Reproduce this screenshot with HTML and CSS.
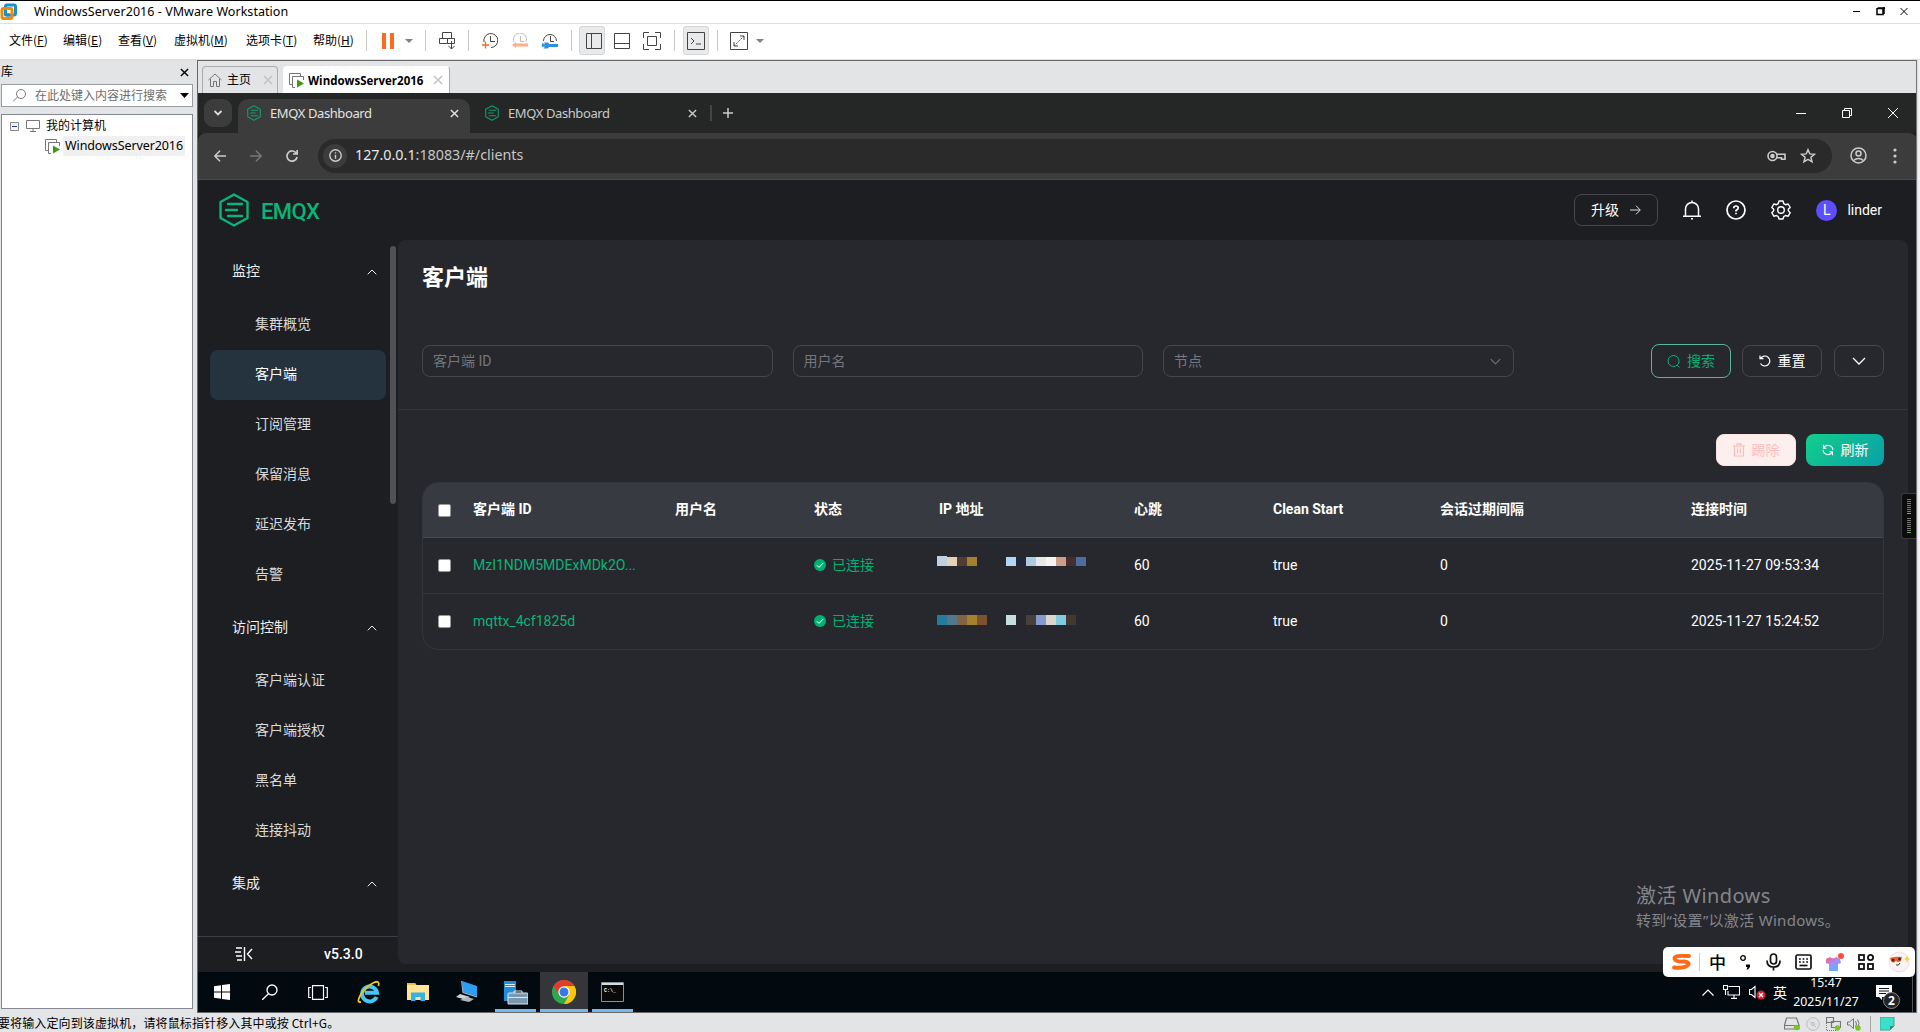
FILE: index.html
```html
<!DOCTYPE html>
<html lang="zh-CN">
<head>
    <meta charset="UTF-8">
    <meta name="viewport" content="width=device-width, initial-scale=1.0">
    <title>WindowsServer2016 - VMware Workstation</title>
    <link rel="stylesheet" href="styles.css">
</head>
<body>
    <!-- 公共图标 -->
    <svg class="defs">
        <symbol id="emqx" viewBox="0 0 30 34">
            <path d="M15 1.5 28.5 9v16L15 32.500 1.500 25V9z" fill="none" stroke="currentColor" stroke-width="2.4" stroke-linejoin="round"/>
            <path d="M9 11h14M7 17h11M9 23h14" stroke="currentColor" stroke-width="2.400" stroke-linecap="round"/>
        </symbol>
        <symbol id="x" viewBox="0 0 10 10">
            <path d="M1 1l8 8M9 1l-8 8" fill="none" stroke="currentColor" stroke-width="1.600"/>
        </symbol>
        <symbol id="up" viewBox="0 0 10 6">
            <path d="M.7 5.300 5 1l4.300 4.300" fill="none" stroke="currentColor"/>
        </symbol>
        <symbol id="down" viewBox="0 0 14 8">
            <path d="M1 1l6 6 6-6" fill="none" stroke="currentColor" stroke-width="1.300"/>
        </symbol>
        <symbol id="vm" viewBox="0 0 15 15">
            <path d="M3 11.500H.5V.5h11V3M6 14.500H3.500v-11h11V7" fill="none" stroke="#777"/>
            <path d="M8 6.500 15 10.500 8 14.500z" fill="#3c9a14"/>
        </symbol>
        <symbol id="ok" viewBox="0 0 12 12">
            <circle cx="6" cy="6" r="6" fill="#00b173"/>
            <path d="M2.800 6.200 5 8.400l4.300-4.500" fill="none" stroke="#fff" stroke-width="1"/>
        </symbol>
    </svg>

    <header class="titlebar">
        <svg class="vm-logo" width="18" height="18" viewBox="0 0 18 18" fill="none" stroke-width="3">
            <rect x="5.500" y="2" width="10" height="10" rx="1.500" stroke="#1b8fcb"/>
            <rect x="2" y="5.500" width="10" height="10" rx="1.500" stroke="#f38b00"/>
            <path d="M5.500 7.500v3.500q0 1 1 1H10" stroke="#1b8fcb"/>
        </svg>
        <span class="win-title">WindowsServer2016 - VMware Workstation</span>
        <svg class="win-ctrl" width="58" height="10" viewBox="0 0 58 10" fill="none" stroke="#000">
            <path d="M1 4.500h7"/>
            <path d="M25 1v6.500h6V1.500h-6M26 1h7M32 0v7" stroke-width="1.500"/>
            <path d="M48.500 1l7 7M55.500 1l-7 7"/>
        </svg>
    </header>

    <nav class="menubar">
        <div class="menus">
            <span>文件(<u>F</u>)</span>
            <span>编辑(<u>E</u>)</span>
            <span>查看(<u>V</u>)</span>
            <span>虚拟机(<u>M</u>)</span>
            <span>选项卡(<u>T</u>)</span>
            <span>帮助(<u>H</u>)</span>
        </div>
        <i class="sep"></i>
        <div class="tools tools-power">
            <svg width="12" height="16"><path d="M0 0h4v16H0zM8 0h4v16H8z" fill="#ff6a1f"/></svg>
            <svg width="8" height="4"><path d="M0 0h8L4 4z" fill="#808080"/></svg>
        </div>
        <i class="sep"></i>
        <div class="tools tools-cad">
            <svg width="17" height="18" viewBox="0 0 17 18" fill="none" stroke="#444">
                <path d="M3.500 6.500v-6h9v6M.5 6.500h8v5h-8zM8.500 6.500h7v5h-7zM12.500 9v8M9.500 14l3 3 3-3" />
            </svg>
        </div>
        <i class="sep"></i>
        <div class="tools tools-snap">
            <svg width="16" height="16" viewBox="0 0 16 16" fill="none">
                <path d="M2 9A7 7 0 1 1 9 14.500M8.500 3v5.500H13" stroke="#444"/>
                <path d="M0 12h7M3.500 8.500v7" stroke="#ff6a1f" stroke-width="1.300"/>
            </svg>
            <svg width="16" height="16" viewBox="0 0 16 16" fill="none">
                <path d="M2 9A6.500 6.500 0 1 1 14 9M8.500 3v5.500H12" stroke="#bbb"/>
                <path d="M0 12l4-3v1.500h12v3H4V15z" fill="#ffae88"/>
            </svg>
            <svg width="16" height="16" viewBox="0 0 16 16" fill="none">
                <path d="M1.500 8A6.500 6.500 0 1 1 14.500 8M8.500 3v5.500H12" stroke="#444"/>
                <path d="M0 10l3 1.500L2 9.500h4l1.500 1.500H16v3H7L5.500 15.500H1.500L3 13.500 0 14z" fill="#2893dc"/>
            </svg>
        </div>
        <i class="sep"></i>
        <div class="tools tools-view">
            <span class="pressed"><svg width="16" height="16" fill="none" stroke="#444"><path d="M.5.5h15v15H.5zM5.500.5v15"/></svg></span>
            <svg width="16" height="16" fill="none" stroke="#444"><path d="M.5.5h15v15H.5zM.5 10.500h15"/></svg>
            <svg width="18" height="18" fill="none" stroke="#444"><path d="M.5 6V.5H6M12 .5h5.500V6M17.500 12v5.500H12M6 17.500H.5V12M4.500 4.500h9v9h-9z"/></svg>
        </div>
        <i class="sep"></i>
        <div class="tools tools-console">
            <span class="pressed"><svg width="18" height="18" fill="none" stroke="#444"><path d="M.5.5h17v17H.5zM4 6l3 3-3 3M9 12h5"/></svg></span>
        </div>
        <i class="sep"></i>
        <div class="tools tools-full">
            <svg width="18" height="18" fill="none" stroke="#444"><path d="M.5.5h17v17H.5zM4 10v4h4M10 4h4v4"/><path d="M4 14 14 4" stroke-dasharray="1.500 1"/></svg>
            <svg width="8" height="4"><path d="M0 0h8L4 4z" fill="#808080"/></svg>
        </div>
    </nav>

    <div class="workspace">
        <aside class="library">
            <div class="lib-head"><span>库</span><svg width="9" height="9"><use href="#x"/></svg></div>
            <div class="lib-search">
                <svg width="13" height="13" fill="none" stroke="#777"><circle cx="8" cy="5" r="4.500"/><path d="M4.500 8 0 12.500"/></svg>
                <span>在此处键入内容进行搜索</span>
                <svg width="9" height="5"><path d="M0 0h9L4.500 5z"/></svg>
            </div>
            <div class="lib-tree">
                <div class="node">
                    <svg width="9" height="9" fill="none"><path d="M.5.5h8v8h-8z" stroke="#888" fill="#f4f4f4"/><path d="M2 4.500h5" stroke="#24439c"/></svg>
                    <svg class="pc" width="14" height="12" fill="none" stroke="#777"><path d="M.5.5h13v8H.5zM7 9v2M4 11.500h6"/></svg>
                    <span>我的计算机</span>
                </div>
                <div class="node child">
                    <svg width="15" height="15"><use href="#vm"/></svg>
                    <span class="selected">WindowsServer2016</span>
                </div>
            </div>
        </aside>

        <main class="vm-area">
            <div class="vm-tabs">
                <div class="vm-tab home">
                    <svg width="14" height="14" fill="none" stroke="#777"><path d="M.5 7 7 1l6.500 6M2.500 6v7.500h3v-5h3v5h3V6"/></svg>
                    <span>主页</span>
                    <svg class="tab-x" width="10" height="10"><use href="#x"/></svg>
                </div>
                <div class="vm-tab current">
                    <svg width="15" height="15"><use href="#vm"/></svg>
                    <span>WindowsServer2016</span>
                    <svg class="tab-x" width="10" height="10"><use href="#x"/></svg>
                </div>
            </div>

            <div class="guest">
                <div class="tabstrip">
                    <span class="tab-search"><svg width="8" height="6" fill="none" stroke="#ddd" stroke-width="1.800"><path d="M.5 1 4 4.500 7.500 1"/></svg></span>
                    <div class="ctab active">
                        <svg class="fav" width="14" height="16"><use href="#emqx"/></svg>
                        <span>EMQX Dashboard</span>
                        <svg width="9" height="9"><use href="#x"/></svg>
                    </div>
                    <div class="ctab">
                        <svg class="fav" width="14" height="16"><use href="#emqx"/></svg>
                        <span>EMQX Dashboard</span>
                        <svg width="9" height="9"><use href="#x"/></svg>
                    </div>
                    <i class="tab-sep"></i>
                    <svg class="tab-plus" width="10" height="10" stroke="#ccc" stroke-width="1.500"><path d="M5 0v10M0 5h10"/></svg>
                    <svg class="chrome-ctrl" width="104" height="12" fill="none" stroke="#fff">
                        <path d="M1 6.500h10M47.500 3.500h7v7h-7zM49.500 3.500v-2h7v7h-2M93 1l10 10M103 1l-10 10"/>
                    </svg>
                </div>

                <div class="toolbar">
                    <svg width="12" height="12" fill="none" stroke="#ccc" stroke-width="1.600"><path d="M12 6H1M6 .8.800 6 6 11.200"/></svg>
                    <svg width="12" height="12" fill="none" stroke="#777" stroke-width="1.600"><path d="M0 6h11M6 .8 11.200 6 6 11.200"/></svg>
                    <svg width="12" height="12" fill="none" stroke="#ccc" stroke-width="1.700"><path d="M10.300 3.200A5.100 5.100 0 1 0 11.100 7M11.200 0v4H7"/></svg>
                    <div class="omnibox">
                        <span class="info"><svg width="13" height="13" fill="none" stroke="#ccc" stroke-width="1.400"><circle cx="6.500" cy="6.500" r="5.700"/><path d="M6.500 5.700v4M6.500 3.200v1.400"/></svg></span>
                        <span class="url">127.0.0.1<em>:18083/#/clients</em></span>
                        <svg width="19" height="12" fill="none" stroke="#ccc" stroke-width="1.600"><circle cx="5.500" cy="6" r="4.500"/><circle cx="5.500" cy="6" r="1.500" fill="#ccc"/><path d="M9.800 4.200H18v5h-3.500V7.800H10"/></svg>
                        <svg class="star" width="16" height="16" viewBox="0 0 16 16" fill="none" stroke="#ccc" stroke-width="1.500"><path d="M8 1.700l1.800 4.200 4.600.4-3.500 3 1.100 4.500L8 11.400l-4 2.400 1.100-4.500-3.500-3 4.600-.4z"/></svg>
                    </div>
                    <svg class="profile" width="17" height="17" fill="none" stroke="#ccc" stroke-width="1.500"><circle cx="8.500" cy="8.500" r="7.500"/><circle cx="8.500" cy="6.500" r="2.500"/><path d="M3.500 13.500q5-4 10 0"/></svg>
                    <svg width="4" height="16" fill="#ccc"><circle cx="2" cy="2" r="1.600"/><circle cx="2" cy="8" r="1.600"/><circle cx="2" cy="14" r="1.600"/></svg>
                </div>

                <div class="page">
                    <div class="page-head">
                        <svg class="logo" width="30" height="34"><use href="#emqx"/></svg>
                        <span class="brand">EMQX</span>
                        <span class="btn upgrade">升级 <svg width="11" height="10" fill="none" stroke="#ddd"><path d="M0 5h10M6 .7 10.300 5 6 9.300"/></svg></span>
                        <svg width="20" height="20" fill="none" stroke="#fff" stroke-width="1.500"><path d="M1 16.300h18M3.500 16V9a6.500 6.500 0 0 1 13 0v7M10 .5v2M9 18.700h2"/></svg>
                        <svg width="20" height="20" fill="none" stroke="#fff" stroke-width="1.700"><circle cx="10" cy="10" r="9"/><path d="M7.800 8.200q0-2.200 2.200-2.200t2.200 2q0 1.300-2.200 2.500v1M10 12.700v1.500"/></svg>
                        <svg width="20" height="20" viewBox="0 0 20 20" fill="none" stroke="#fff" stroke-width="1.400" stroke-linejoin="round"><path d="M8 1h4l.8 2.700 1.700 1 2.700-.7 2 3.500L17.300 9.300v1.500l1.900 1.900-2 3.500-2.700-.7-1.700 1L12 19H8l-.8-2.500-1.700-1-2.700.7-2-3.500 1.900-1.900V9.300L.8 7.500l2-3.500 2.700.7 1.700-1z"/><circle cx="10" cy="10" r="3.300"/></svg>
                        <span class="avatar">L</span>
                        <span class="user">linder</span>
                    </div>

                    <div class="page-body">
                        <div class="side">
                            <ul class="side-menu">
                                <li class="group">监控<svg width="10" height="6"><use href="#up"/></svg></li>
                                <li>集群概览</li>
                                <li class="active">客户端</li>
                                <li>订阅管理</li>
                                <li>保留消息</li>
                                <li>延迟发布</li>
                                <li>告警</li>
                                <li class="group">访问控制<svg width="10" height="6"><use href="#up"/></svg></li>
                                <li>客户端认证</li>
                                <li>客户端授权</li>
                                <li>黑名单</li>
                                <li>连接抖动</li>
                                <li class="group">集成<svg width="10" height="6"><use href="#up"/></svg></li>
                            </ul>
                            <i class="side-scroll"></i>
                            <div class="side-foot">
                                <svg width="18" height="16" fill="none" stroke="#fff" stroke-width="1.400"><path d="M1 2h6M0 6h6M1 10h6M2 14h5M9.500 1v14M17 3l-4.500 5 4.500 5"/></svg>
                                <span>v5.3.0</span>
                            </div>
                        </div>

                        <div class="content">
                            <h1>客户端</h1>
                            <div class="filters">
                                <div class="input">客户端 ID</div>
                                <div class="input">用户名</div>
                                <div class="input select">节点<svg width="11" height="7"><use href="#down"/></svg></div>
                                <div class="filter-btns">
                                    <span class="btn search"><svg width="13" height="13" fill="none" stroke="#00b173"><circle cx="6.500" cy="6" r="5.500"/><path d="M10 10l2.500 2.500"/></svg>搜索</span>
                                    <span class="btn"><svg width="12" height="12" fill="none" stroke="#fff" stroke-width="1.200"><path d="M1.500 3.500A5 5 0 1 1 1.500 8.500M1 .5v3.200h3.500"/></svg>重置</span>
                                    <span class="btn more"><svg width="14" height="8"><use href="#down"/></svg></span>
                                </div>
                            </div>
                            <div class="actions">
                                <span class="btn kick"><svg width="12" height="14" fill="none" stroke="#fbbcbc" stroke-width="1.200"><path d="M0 3h12M4 3V.8h4V3M1.500 3v10h9V3M4.500 5.500v5M7.500 5.500v5"/></svg>踢除</span>
                                <span class="btn refresh"><svg width="12" height="12" fill="none" stroke="#fff" stroke-width="1.100"><path d="M1.500.8v3.400h3M1.600 4.200A4.900 4.900 0 0 1 10.900 6M10.500 11.200V7.800h-3M10.400 7.800A4.900 4.900 0 0 1 1.100 6"/></svg>刷新</span>
                            </div>
                            <div class="table">
                                <div class="row head">
                                    <i class="check"></i><span>客户端 ID</span><span>用户名</span><span>状态</span><span>IP 地址</span><span>心跳</span><span>Clean Start</span><span>会话过期间隔</span><span>连接时间</span>
                                </div>
                                <div class="row">
                                    <i class="check"></i>
                                    <span class="link">MzI1NDM5MDExMDk2O...</span>
                                    <span></span>
                                    <span class="state"><svg width="12" height="12"><use href="#ok"/></svg>已连接</span>
                                    <svg class="mosaic first" width="150" height="10">
                                        <path d="M0 0h10v10H0z" fill="#bfd0e3"/><path d="M10 1h10v9H10z" fill="#e5d1b5"/><path d="M20 1h10v9H20z" fill="#533b31"/><path d="M30 1h10v9H30z" fill="#a47f2c"/>
                                        <path d="M69 1h10v9H69z" fill="#afd7f1"/><path d="M79 1h10v9H79z" fill="#24263a"/><path d="M89 1h10v9H89z" fill="#afcbe2"/><path d="M99 1h10v9H99z" fill="#e7e8ea"/><path d="M109 1h10v9h-10z" fill="#f6f3f0"/><path d="M119 1h10v9h-10z" fill="#cc9e8a"/><path d="M129 1h10v9h-10z" fill="#432f2d"/><path d="M139 1h10v9h-10z" fill="#4d6c9f"/>
                                    </svg>
                                    <span>60</span><span>true</span><span>0</span><span>2025-11-27 09:53:34</span>
                                </div>
                                <div class="row">
                                    <i class="check"></i>
                                    <span class="link">mqttx_4cf1825d</span>
                                    <span></span>
                                    <span class="state"><svg width="12" height="12"><use href="#ok"/></svg>已连接</span>
                                    <svg class="mosaic" width="150" height="10">
                                        <path d="M0 0h10v10H0z" fill="#257b9b"/><path d="M10 0h10v10H10z" fill="#527890"/><path d="M20 0h10v10H20z" fill="#846342"/><path d="M30 0h10v10H30z" fill="#a4822d"/><path d="M40 0h10v10H40z" fill="#7d532f"/>
                                        <path d="M69 0h10v10H69z" fill="#c3dfe0"/><path d="M89 0h10v10H89z" fill="#464239"/><path d="M99 0h10v10H99z" fill="#8799d2"/><path d="M109 0h10v10h-10z" fill="#dbd6cb"/><path d="M119 0h10v10h-10z" fill="#7fcbdf"/><path d="M129 0h10v10h-10z" fill="#43372f"/>
                                    </svg>
                                    <span>60</span><span>true</span><span>0</span><span>2025-11-27 15:24:52</span>
                                </div>
                            </div>
                        </div>
                    </div>
                </div>

                <div class="taskbar">
                    <span class="task"><svg width="16" height="16" fill="#fff"><path d="M0 2.200 7 1.200v6.300H0zM8 1 16 0v7.500H8zM0 8.500h7v6.300L0 13.800zM8 8.500h8V16l-8-1z"/></svg></span>
                    <span class="task"><svg width="16" height="16" fill="none" stroke="#fff" stroke-width="1.300"><circle cx="10" cy="6" r="5"/><path d="M6.500 9.800 0 16"/></svg></span>
                    <span class="task"><svg width="20" height="15" fill="none" stroke="#fff" stroke-width="1.200"><path d="M4.500.7h11v13.600h-11zM3 2.500H.7v10H3M17 2.500h2.300v10H17"/></svg></span>
                    <span class="task ie"><svg width="24" height="24" viewBox="0 0 24 24" fill="none"><path d="M19.500 17A7.500 7.500 0 1 1 20 12.700H8" stroke="#45c6f4" stroke-width="4"/><path d="M4 22Q-1 23 3.500 15T17 2.500q6-2.500 4.500 3.500" stroke="#f5c518" stroke-width="1.800"/></svg></span>
                    <span class="task"><svg width="22" height="20" viewBox="0 0 22 20"><path d="M0 1h8l1.500 2H22v15H0z" fill="#ffe594"/><path d="M0 1h8l1 2H0z" fill="#f0b93c"/><path d="M4 10.500h14V19h-4.500v-4h-5v4H4z" fill="#38b0e6"/></svg></span>
                    <span class="task"><svg width="24" height="24" viewBox="0 0 24 24"><path d="M7 1l15 5v10L8 12z" fill="#2c9ff5"/><path d="M6 1h1l1.500 11L22 16v1.500L7.500 13z" fill="#8cb7da"/><path d="M5 14l10 3-5 2.500L1 17z" fill="#cfd6da"/><path d="M12 17l7 2-5 3-9-2z" fill="#aeb6bd"/></svg></span>
                    <span class="task open"><svg width="24" height="25" viewBox="0 0 24 25"><path d="M0 1h12v20H0z" fill="#238cd9"/><path d="M1 6.500h10M1 4.500h10" stroke="#d7edfb"/><path d="M4 14q0-1 1-1h18q1 0 1 1v10H4z" fill="#7a98af" stroke="#dce7ee"/><path d="M10 13v-2h8v2M4 17.500h20" stroke="#dce7ee" fill="none"/></svg></span>
                    <span class="task open wide"><svg width="24" height="24" viewBox="0 0 24 24"><circle cx="12" cy="12" r="12" fill="#2da94f"/><path d="M1.600 6A12 12 0 0 1 22.400 6H12L7 15z" fill="#e33b2e"/><path d="M22.400 6A12 12 0 0 1 12 24L17 15 12 6z" fill="#fdc60b"/><circle cx="12" cy="12" r="5.700" fill="#fff"/><circle cx="12" cy="12" r="4.500" fill="#3778e8"/></svg></span>
                    <span class="task open cmd"><svg width="23" height="20" viewBox="0 0 23 20"><path d="M.5.5h22v19H.5z" fill="#090909" stroke="#8a8f94"/><path d="M1 1h21v2H1z" fill="#d5dde3"/><text x="3" y="10" font-size="5" font-weight="700" font-family="Liberation Mono" fill="#fff">C:\_</text></svg></span>
                    <div class="tray">
                        <svg width="12" height="7" fill="none" stroke="#fff" stroke-width="1.200"><path d="M.5 6.500 6 1l5.500 5.500"/></svg>
                        <svg width="17" height="14" fill="none" stroke="#fff" stroke-width="1.100"><path d="M5.500 1.500h11v8.500H5V6M8 13.400h6M11 10v3M.5.5h4v4h-4zM2.500 5v5"/></svg>
                        <svg width="17" height="15" fill="none" stroke="#fff" stroke-width="1.100"><path d="M.5 4.500h2l3.500-3v11l-3.500-3h-2z"/><circle cx="12" cy="10" r="4.500" fill="#d9202a" stroke="none"/><path d="M10 8l4 4M14 8l-4 4" stroke-width="1.300"/></svg>
                        <span class="lang">英</span>
                        <span class="clock">15:47<br>2025/11/27</span>
                        <span class="notify"><svg width="17" height="15"><path d="M0 0h16v12H6v3l-3-3H0z" fill="#fff"/><path d="M3 3.500h10M3 6h10M3 8.500h7" stroke="#111"/></svg><b>2</b></span>
                        <i class="peek"></i>
                    </div>
                </div>

                <!-- 浮层 -->
                <div class="watermark"><p>激活 Windows</p><small>转到“设置”以激活 Windows。</small></div>
                <div class="io-handle"><i></i><i class="green"></i></div>
                <div class="ime">
                    <svg width="19" height="16" viewBox="0 0 19 16" fill="none" stroke="#ff6a17" stroke-width="3.800" stroke-linecap="round"><path d="M17 2Q2 1 2.500 4.500T12 7.500q7 1 3.500 4T2 13.500"/></svg>
                    <i></i>
                    <span>中</span>
                    <svg width="12" height="15"><circle cx="3" cy="3" r="2.300" fill="none" stroke="#000" stroke-width="1.300"/><path d="M6 9.500h4V12l-2 2.500H6.500L7.500 12H6z"/></svg>
                    <svg width="15" height="18" fill="none" stroke="#111" stroke-width="1.700"><rect x="4.500" y="1" width="6" height="10" rx="3"/><path d="M1 7.500q0 6.500 6.500 6.500T14 7.500M7.500 14v3.500"/></svg>
                    <svg width="17" height="16" fill="none" stroke="#111" stroke-width="1.700"><rect x="1" y="1" width="15" height="14" rx="1.500"/><path d="M4 5h9M4 8h9" stroke-dasharray="1.800 1.800"/><path d="M4.500 11.500h8"/></svg>
                    <svg width="18" height="18" viewBox="0 0 18 18"><defs><linearGradient id="shirt" x2=".6" y2="1"><stop stop-color="#ff5c73"/><stop offset=".5" stop-color="#a98bf5"/><stop offset="1" stop-color="#53b7ff"/></linearGradient></defs><path d="M0 6l4-2q3 2.500 6 0l4 2 1 4-3 1v7H3v-7L0 10z" fill="url(#shirt)"/><circle cx="15" cy="3" r="3" fill="#ff4d3a"/></svg>
                    <svg width="16" height="16" fill="none" stroke="#111" stroke-width="1.800"><rect x="1" y="1" width="5" height="5"/><circle cx="12.500" cy="3.500" r="2.600"/><rect x="1" y="10" width="5" height="5"/><rect x="10" y="10" width="5" height="5"/></svg>
                    <svg width="22" height="22" viewBox="0 0 22 22"><circle cx="11" cy="11" r="10" fill="#f8f3f4" stroke="#eedede"/><path d="M2 7q7-2 12-1l-1 4q-3 2-5 0-3 3-5 0z" fill="#e8642a"/><circle cx="5" cy="9" r="1.500" fill="#4b251e"/><circle cx="11.500" cy="8" r="1.500" fill="#4b251e"/><path d="M8 14q3 1 4-2" stroke="#333" fill="none"/><path d="M19 4l1 3 2 1-2 1-1 3-1-3-2-1 2-1z" fill="#fdcf35"/></svg>
                </div>
            </div>
        </main>
        <i class="edge"></i>
    </div>

    <footer class="statusbar">
        <span>要将输入定向到该虚拟机，请将鼠标指针移入其中或按 Ctrl+G。</span>
        <div class="devices">
            <svg width="16" height="14" fill="none" stroke="#777"><path d="M2.500 1h10l2.500 7v4H.5V8zM.5 8.500H15" stroke-width="1.200"/><circle cx="12.500" cy="10.500" r="2.700" fill="#7ac520" stroke="none"/></svg>
            <svg width="14" height="14" fill="none" stroke="#bbb"><circle cx="7" cy="7" r="6.300"/><circle cx="7" cy="7" r="1.500"/><path d="M4 4.500l1.500 1.500M8.500 8.500 10 10"/></svg>
            <svg width="15" height="14" fill="none" stroke="#777"><path d="M.5.5h7v5h-7zM5.500 4.500h9v6h-9z" stroke-width="1.200"/><path d="M.5 6v7.500h10" stroke-dasharray="1 1"/><circle cx="11.500" cy="11" r="2.700" fill="#7ac520" stroke="none"/></svg>
            <svg width="14" height="14" fill="none" stroke="#777"><path d="M.5 5h2l4-3.500v10l-4-3.500h-2zM8.500 4q2 3 0 6M10.500 2.500q3 4 0 8"/><circle cx="11" cy="11" r="2.700" fill="#7ac520" stroke="none"/></svg>
            <i></i>
            <svg width="15" height="14"><path d="M0 0h14v9l-4 4H0z" fill="#3be0c8" stroke="#38a898"/><path d="M14 9h-4v4z" fill="#258f80"/></svg>
        </div>
    </footer>
</body>
</html>
```

FILE: styles.css
```css
* {box-sizing: border-box;}

body {
    margin: 0;
    width: 1920px;
    height: 1032px;
    overflow: hidden;
    display: grid;
    grid-template-rows: 24px 36px 953px 19px;
    background: #e2e4e6;
    color: #000;
    font: 12px/16px "Noto Sans", "Noto Sans CJK SC", sans-serif;
}

svg {
    display: block;
    flex: none;
}

i, em {font-style: normal;}

.defs {
    position: absolute;
    width: 0;
    height: 0;
}

/* VMware 标题栏 */
.titlebar {
    display: flex;
    align-items: center;
    padding: 0 10px 0 0;
    background: #fff;
    border-top: 1px solid #000;
    border-bottom: 1px solid #dfe0e1;
}

.win-title {
    margin-left: 16px;
    font-size: 12.5px;
    letter-spacing: 0.05px;
}

.win-ctrl {margin-left: auto;}

.menubar {
    display: flex;
    align-items: center;
    background: #fff;
    border-bottom: 1px solid #dfe0e1;
    padding-bottom: 2px;
}

.menus {
    display: grid;
    grid-template-columns: 54px 55px 56px 72px 67px 53px;
    padding: 0 0 2px 9px;
    font-family: "Noto Sans CJK SC", sans-serif;
}

.menus span {white-space: nowrap;}

.sep {
    width: 1px;
    height: 21px;
    background: #c8c8c8;
}

.tools {
    display: flex;
    align-items: center;
}

.tools-power {width: 58px; padding-left: 15px; gap: 11px;}
.tools-cad {width: 42px; padding-left: 13px;}
.tools-snap {width: 102px; padding-left: 13px; gap: 14px;}
.tools-view {width: 102px; padding-left: 7px; gap: 9px;}
.tools-view svg:last-child {margin-left: 4px;}
.tools-console {width: 42px; padding-left: 8px;}
.tools-full {padding-left: 12px; gap: 8px;}

.pressed {
    display: flex;
    align-items: center;
    justify-content: center;
    width: 26px;
    height: 29px;
    border: 1px solid #d4d5d6;
    border-radius: 3px;
    background: #e9eaeb;
}

.workspace {
    display: grid;
    grid-template-columns: 197px 1720px 3px;
}

.edge {
    background: #f0f0f0;
    border-left: 1px solid #dcdcdc;
}

/* 左侧库 */
.library {
    display: flex;
    flex-direction: column;
    padding: 0 4px 4px 1px;
}

.lib-head {
    display: flex;
    align-items: center;
    justify-content: space-between;
    height: 24px;
    padding-right: 4px;
}

.lib-search {
    display: flex;
    align-items: center;
    height: 23px;
    background: #fff;
    border: 1px solid #999da0;
    color: #6d6d6d;
    padding: 0 3px 0 11px;
}

.lib-search span {margin: 0 auto 0 9px;}

.lib-tree {
    flex: 1;
    margin-top: 7px;
    padding-top: 1px;
    background: #fff;
    border: 1px solid #828790;
}

.node {
    display: flex;
    align-items: center;
    height: 20px;
    padding-left: 8px;
}

.node .pc {margin: 0 6px 0 7px;}

.node.child {padding-left: 43px;}

.selected {
    margin-left: 3px;
    padding: 2px;
    background: #f0f0f0;
    font-size: 12.500px;
    letter-spacing: -0.1px;
}

.vm-area {
    display: grid;
    grid-template-rows: 32px 919px;
    border: 1px solid #66686a;
    border-right-color: #77797c;
    overflow: hidden;
}

.vm-tabs {
    display: flex;
    align-items: flex-end;
    padding-left: 4px;
    gap: 5px;
    background: #e2e4e6;
}

.vm-tab {
    display: flex;
    align-items: center;
    height: 27px;
    border: 1px solid #aaadb0;
    border-bottom: 0;
    border-radius: 4px 4px 0 0;
    padding-left: 5px;
}

.vm-tab.home {width: 76px;}

.vm-tab.home span {margin: 0 12px 0 5px;}

.vm-tab.current {
    width: 167px;
    background: #fff;
    border-color: #fff #aaadb0 #fff #fff;
    font: bold 11.500px "Open Sans", sans-serif;
}

.vm-tab.current span {
    width: 116px;
    margin: 0 9px 0 4px;
    white-space: nowrap;
}

.tab-x {color: #c2c3c4;}

/* 虚拟机画面 */
.guest {
    position: relative;
    display: grid;
    grid-template-rows: 40px 47px 792px 40px;
    background: #1d1e22;
    color: #fff;
}

.tabstrip {
    display: flex;
    align-items: center;
    background: #242725;
    padding-left: 6px;
}

.tab-search {
    display: flex;
    align-items: center;
    justify-content: center;
    width: 28px;
    height: 28px;
    margin-right: 6px;
    border-radius: 9px;
    background: #3c3c3c;
}

.ctab {
    display: flex;
    align-items: center;
    width: 238px;
    height: 34px;
    padding: 0 11px 6px 15px;
    align-self: flex-end;
    color: #c9cac9;
    font-size: 13px;
}

.ctab.active {
    width: 232px;
    padding: 0 11px 6px 9px;
    border-radius: 10px 10px 0 0;
    background: #3c3c3c;
    color: #e3e3e3;
}

.ctab .fav {
    color: #109a6b;
    margin-right: 9px;
}

.ctab span {
    margin-right: auto;
    letter-spacing: -0.4px;
}

.tab-sep {
    width: 2px;
    height: 16px;
    margin-left: 2px;
    background: #444;
}

.tab-plus {margin-left: 11px;}

.chrome-ctrl {margin: 0 18px 0 auto;}

.toolbar {
    display: flex;
    align-items: center;
    gap: 24px;
    padding: 0 20px 1px 16px;
    background: #3c3c3c;
    border-bottom: 1px solid #4c4c4c;
    border-radius: 8px 8px 0 0;
}

.omnibox {
    display: flex;
    align-items: center;
    width: 1514px;
    height: 34px;
    margin-left: -4px;
    padding: 0 16px 0 5px;
    border-radius: 17px;
    background: #2a2a2a;
}

.info {
    display: flex;
    align-items: center;
    justify-content: center;
    width: 24px;
    height: 24px;
    border-radius: 50%;
    background: #3c3c3c;
}

.url {
    margin: 0 auto 2px 8px;
    color: #e8e8e8;
    font-size: 14.300px;
}

.url em {color: #c7c7c7;}

.star {margin-left: 14px;}

.profile {margin: 0 2px 0 -6px;}

/* EMQX 页面 */
.page {
    display: grid;
    grid-template-rows: 60px 732px;
    font: 14px/20px Roboto, "Noto Sans CJK SC", sans-serif;
}

.page-head {
    display: flex;
    align-items: center;
    padding: 0 35px 0 21px;
}

.logo {color: #0bb377;}

.brand {
    margin: 3px auto 0 12px;
    color: #0bb377;
    font-size: 22px;
    font-weight: 500;
    letter-spacing: -0.6px;
}

.page-head > svg:not(.logo) {margin-right: 24.500px;}

.btn {
    display: flex;
    align-items: center;
    justify-content: center;
    gap: 7px;
    width: 80px;
    height: 32px;
    border: 1px solid #45474d;
    border-radius: 8px;
    color: #fff;
    white-space: nowrap;
}

.page-head .upgrade {
    width: 84px;
    gap: 11px;
    margin-right: 24px;
}

.avatar {
    width: 21px;
    height: 21px;
    line-height: 21px;
    margin: 1px 10px 0 1px;
    border-radius: 50%;
    background: #5e4eff;
    text-align: center;
}

.page-body {
    display: grid;
    grid-template-columns: 200px 1510px;
}

.side {
    position: relative;
    display: grid;
    grid-template-rows: 696px 36px;
}

.side-menu {
    list-style: none;
    margin: 0;
    padding: 4px 0 0 12px;
    overflow: hidden;
}

.side-menu li {
    width: 176px;
    height: 50px;
    padding-left: 45px;
    line-height: 49px;
    border-radius: 8px;
    color: #d9dadc;
}

.side-menu .group {
    display: flex;
    align-items: center;
    justify-content: space-between;
    height: 56px;
    padding: 0 9px 2px 22px;
    color: #eee;
}

.group svg {margin-top: 2px;}

.side-menu .active {
    background: #25333e;
    color: #fff;
}

.side-scroll {
    position: absolute;
    right: 2px;
    top: 6px;
    width: 6px;
    height: 258px;
    border-radius: 3px;
    background: #505155;
}

.side-foot {
    display: flex;
    align-items: center;
    gap: 71px;
    padding: 0 0 2px 37px;
    border-top: 1px solid #3c3d42;
    font-weight: 500;
}

.content {
    height: 724px;
    border-radius: 8px;
    background: #27282d;
}

h1 {
    margin: 0;
    padding: 25px 0 0 24px;
    height: 105px;
    font-size: 22px;
    line-height: 26px;
}

.filters {
    display: flex;
    gap: 20px;
    height: 65px;
    padding: 0 24px;
    border-bottom: 1px solid #35363b;
}

.input {
    width: 350.500px;
    height: 32px;
    padding: 0 10px;
    border: 1px solid #45474d;
    border-radius: 8px;
    color: #74767c;
    line-height: 30px;
}

.select {
    display: flex;
    justify-content: space-between;
    align-items: center;
    padding-right: 12px;
    color: #77797f;
}

.filter-btns {
    display: flex;
    gap: 12px;
    margin-left: auto;
}

.search {
    height: 34px;
    margin: -1px -1px 0 0;
    border-color: #58b79b;
    color: #00b173;
}

.more {width: 50px;}

.actions {
    display: flex;
    justify-content: flex-end;
    gap: 10px;
    padding: 24px 24px 16px;
}

.kick {
    border-color: #fde2e2;
    background: #feefef;
    color: #fbbcbc;
}

.refresh {
    width: 78px;
    border: 0;
    background: linear-gradient(135deg, #13cf8a, #0a9fa8);
}

.table {
    margin: 0 24px;
    border: 1px solid #33363b;
    border-radius: 16px;
    overflow: hidden;
}

.row {
    display: grid;
    grid-template-columns: 50px 202px 139px 125px 195px 139px 167px 251px 193px;
    align-items: center;
    height: 56px;
    border-bottom: 1px solid #35363b;
}

.row:last-child {
    height: 55px;
    border: 0;
}

.row.head {
    height: 55px;
    background: #373b41;
    border-color: #45484d;
    font-weight: 700;
}

.row > span {margin-top: -2px;}

.check {
    width: 13px;
    height: 13px;
    margin: 0 0 0 15px;
    border: 1px solid #999;
    border-radius: 2px;
    background: #fff;
}

.link {color: #0bb377;}

.state {
    display: flex;
    align-items: center;
    gap: 6px;
    color: #00b173;
}

.mosaic {margin: -4px 0 0 -2px;}

.mosaic.first {margin-top: -9px;}

/* 任务栏 */
.taskbar {
    display: flex;
    background: #02090f;
}

.task {
    display: flex;
    align-items: center;
    justify-content: center;
    width: 49px;
    border-bottom: 3px solid transparent;
    padding-top: 3px;
}

.task:nth-child(-n+3) {width: 48px;}

.task.ie {margin-left: 2px;}

.task.open {
    width: 41px;
    margin: 0 4px 0 4px;
    border-color: #76b9ed;
}

.task.wide {
    width: 48px;
    margin: 0 4px 0 0;
    background: #34363a;
}

.task.cmd {margin: 0;}

.tray {
    display: flex;
    align-items: center;
    margin-left: auto;
}

.tray svg {margin-right: 9px;}

.lang {
    width: 16px;
    margin-left: -2px;
    font: 14px "Noto Sans CJK SC", sans-serif;
}

.clock {
    width: 76px;
    margin: 0 5px 0 -1px;
    font-size: 12.300px;
    line-height: 19px;
    text-align: center;
}

.notify {
    position: relative;
    margin-left: 7px;
}

.notify b {
    position: absolute;
    left: 7px;
    top: 7px;
    width: 17px;
    height: 17px;
    border: 1px solid #888;
    border-radius: 50%;
    background: #222529;
    line-height: 15px;
    text-align: center;
}

.peek {
    width: 1px;
    height: 40px;
    margin: 0 4px 0 10px;
    background: #555;
}

/* 浮层 */
.watermark {
    position: absolute;
    left: 1438px;
    top: 788px;
    color: #85868a;
}

.watermark p {
    margin: 0;
    font-size: 20px;
    line-height: 30px;
    letter-spacing: 0.4px;
}

.watermark small {
    display: block;
    font-size: 15px;
    line-height: 18px;
    letter-spacing: 0.3px;
    white-space: nowrap;
}

.io-handle {
    position: absolute;
    right: 0;
    top: 400px;
    width: 16px;
    height: 46px;
    padding: 5px 0 0 5px;
    border: 1px solid #3b3b3b;
    border-right: 0;
    border-radius: 3px 0 0 3px;
    background: #0d0d0d;
}

.io-handle i {
    display: block;
    width: 4px;
    height: 15px;
    margin-bottom: 4px;
    background: repeating-linear-gradient(#777 0 1px, transparent 1px 2px);
    border-bottom: 1px solid #e08a17;
}

.io-handle .green {border-color: #62b41b;}

.ime {
    position: absolute;
    left: 1465px;
    top: 854px;
    width: 252px;
    height: 30px;
    display: flex;
    align-items: center;
    gap: 14px;
    padding-left: 9px;
    border-radius: 5px;
    background: #fff;
    color: #000;
}

.ime i {
    width: 1px;
    height: 18px;
    margin: 0 -5px 0 -6px;
    background: #ccc;
}

.ime span {font: 500 17px/24px "Noto Sans CJK SC", sans-serif;}

.statusbar {
    display: flex;
    align-items: center;
    justify-content: space-between;
    padding-right: 25px;
    font-family: "Noto Sans CJK SC", sans-serif;
}

.statusbar > span {
    margin-left: -2px;
    letter-spacing: 0.12px;
}

.devices {
    display: flex;
    align-items: center;
    gap: 6px;
    padding-top: 3px;
}

.devices i {
    width: 1px;
    height: 16px;
    margin: 0 3px;
    background: #aaa;
}
```
